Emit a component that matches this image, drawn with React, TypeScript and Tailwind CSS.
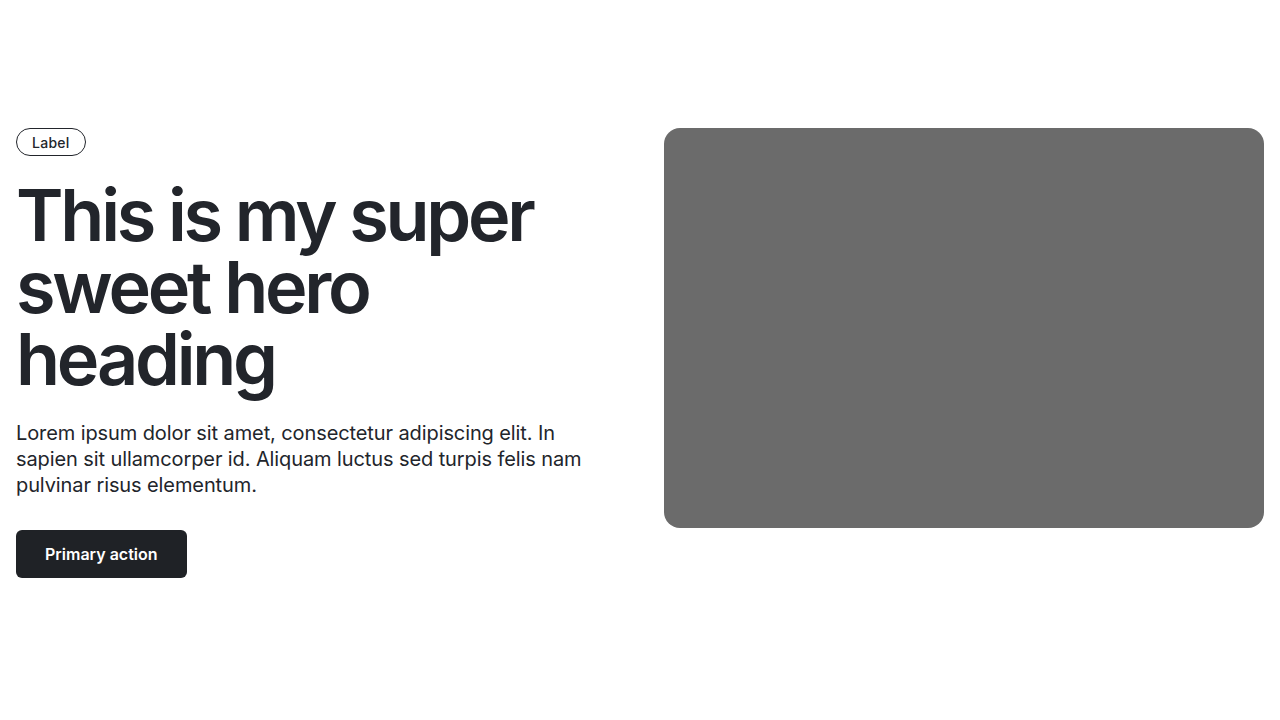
export default function App() {
  return (
    <div className="min-h-[720px] bg-white px-4 pt-[128px] text-[#22252b]" style={{ fontFamily: "Inter, 'Noto Sans', sans-serif" }}>
      <div className="flex gap-12">
        <div className="flex w-[600px] flex-col items-start">
          <span className="inline-flex h-7 items-center rounded-full border border-[#22252b] px-[15px] text-[14px] font-medium tracking-[0.02em]">Label</span>
          <h1 className="mt-[23px] text-[72px] font-semibold leading-[72px] tracking-[-0.045em]">This is my super sweet hero heading</h1>
          <p className="mt-[25px] text-[20px] leading-[26px] tracking-[-0.005em]">Lorem ipsum dolor sit amet, consectetur adipiscing elit. In sapien sit ullamcorper id. Aliquam luctus sed turpis felis nam pulvinar risus elementum.</p>
          <button className="mt-8 h-12 rounded-md bg-[#1f2226] px-[29px] text-[16px] font-semibold text-white">Primary action</button>
        </div>
        <div className="h-[400px] w-[600px] rounded-2xl bg-[#6b6b6b]" />
      </div>
    </div>
  );
}
